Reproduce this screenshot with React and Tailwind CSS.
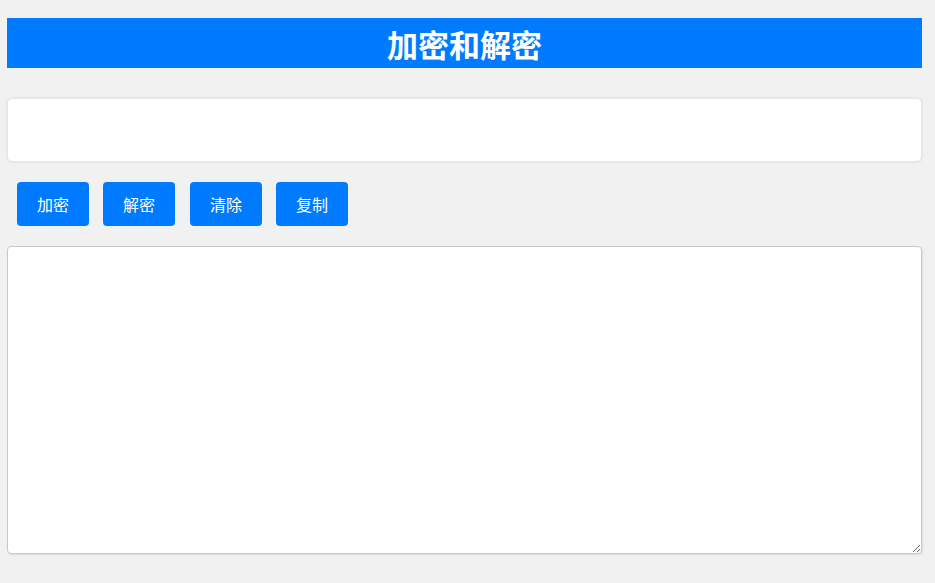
export default function App() {
  const font = { fontFamily: '"Microsoft YaHei", "Noto Sans CJK SC", sans-serif' };
  return (
    <div className="min-h-[583px] w-[935px] bg-[#f1f1f1] pt-[18px]" style={font}>
      <div className="ml-[7px] w-[915px]">
        <div className="flex h-[50px] items-center justify-center bg-[#007bff] text-[31px] font-bold leading-none text-white">
          加密和解密
        </div>
        <div className="mt-[30px] h-[64px] rounded-[5px] border border-[#e4e4e4] bg-white shadow-[0_0_3px_rgba(0,0,0,0.08)]"></div>
        <div className="mt-[20px] flex gap-[14px] pl-[10px]">
          {["加密", "解密", "清除", "复制"].map((t, i) => (
            <button
              key={t}
              className={`flex h-[44px] w-[72px] items-center justify-center rounded-[4px] bg-[#007bff] text-[16px] text-white ${i === 2 ? "ml-[1px]" : ""}`}
            >
              {t}
            </button>
          ))}
        </div>
        <textarea
          className="mt-[20px] block h-[308px] w-[915px] resize-y rounded-[4px] border border-[#c8c8c8] bg-white shadow-[1px_1px_2px_rgba(0,0,0,0.08)] outline-none"
        ></textarea>
      </div>
    </div>
  );
}
